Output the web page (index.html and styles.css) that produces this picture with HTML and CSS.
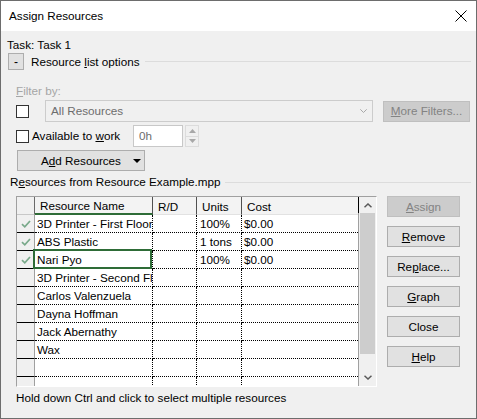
FILE: index.html
```html
<!DOCTYPE html>
<html>
<head>
<meta charset="utf-8">
<title>Assign Resources</title>
<link rel="stylesheet" href="styles.css">
</head>
<body>
<div class="dialog">
  <div class="titlebar">
    <span class="title">Assign Resources</span>
    <svg class="close" width="12" height="12" viewBox="0 0 12 12"><path d="M0.5 0.5 L11.5 11.5 M11.5 0.5 L0.5 11.5" stroke="#000" stroke-width="1" fill="none"/></svg>
  </div>
  <div class="content">
    <div class="task">Task: Task 1</div>
    <div class="opts">
      <div class="collapse">-</div>
      <span class="opts-label">Resource <u>l</u>ist options</span>
      <div class="rule"></div>
    </div>
    <div class="filter-label"><u>F</u>ilter by:</div>
    <div class="filter-row">
      <span class="cb"></span>
      <div class="combo">
        <span>All Resources</span>
        <svg width="7" height="4" viewBox="0 0 7 4"><path d="M0.3 0.3 L3.5 3.5 L6.7 0.3" stroke="#a8a8a8" stroke-width="1" fill="none"/></svg>
      </div>
      <div class="btn disabled more"><span><u>M</u>ore Filters...</span></div>
    </div>
    <div class="avail-row">
      <span class="cb"></span>
      <span class="avail-label">Available to <u>w</u>ork</span>
      <div class="hours">0h</div>
      <div class="spin">
        <div class="spin-part"><svg width="7" height="4" viewBox="0 0 7 4"><path d="M0 4 L3.5 0 L7 4 Z" fill="#a8a8a8"/></svg></div>
        <div class="spin-part"><svg width="7" height="4" viewBox="0 0 7 4"><path d="M0 0 L3.5 4 L7 0 Z" fill="#a8a8a8"/></svg></div>
      </div>
    </div>
    <div class="add-btn">
      <span class="add-text">A<u>d</u>d Resources</span>
      <svg class="add-arrow" width="8" height="4" viewBox="0 0 8 4"><path d="M0 0 L8 0 L4 4 Z" fill="#000"/></svg>
    </div>
    <div class="res-label">
      <span>R<u>e</u>sources from Resource Example.mpp</span>
      <div class="rule"></div>
    </div>
    <div class="main">
      <div class="grid">
        <div class="table">
          <div class="hrow">
            <div class="hcell c-ind"></div>
            <div class="hcell c-name active">Resource Name</div>
            <div class="hcell c-rd">R/D</div>
            <div class="hcell c-units">Units</div>
            <div class="hcell c-cost">Cost</div>
          </div>
          <div class="rows">
            <div class="row">
              <div class="ind"><svg width="10" height="8" viewBox="0 0 10 8"><path d="M1 4.2 L3.8 6.8 L9 1" stroke="#79a98a" stroke-width="1.7" fill="none"/></svg></div>
              <div class="cell c-name">3D Printer - First Floor</div>
              <div class="cell c-rd"></div>
              <div class="cell c-units">100%</div>
              <div class="cell c-cost">$0.00</div>
            </div>
            <div class="row">
              <div class="ind"><svg width="10" height="8" viewBox="0 0 10 8"><path d="M1 4.2 L3.8 6.8 L9 1" stroke="#79a98a" stroke-width="1.7" fill="none"/></svg></div>
              <div class="cell c-name">ABS Plastic</div>
              <div class="cell c-rd"></div>
              <div class="cell c-units">1 tons</div>
              <div class="cell c-cost">$0.00</div>
            </div>
            <div class="row">
              <div class="ind"><svg width="10" height="8" viewBox="0 0 10 8"><path d="M1 4.2 L3.8 6.8 L9 1" stroke="#79a98a" stroke-width="1.7" fill="none"/></svg></div>
              <div class="cell c-name sel">Nari Pyo</div>
              <div class="cell c-rd"></div>
              <div class="cell c-units">100%</div>
              <div class="cell c-cost">$0.00</div>
            </div>
            <div class="row">
              <div class="ind"></div>
              <div class="cell c-name">3D Printer - Second Floor</div>
              <div class="cell c-rd"></div>
              <div class="cell c-units"></div>
              <div class="cell c-cost"></div>
            </div>
            <div class="row">
              <div class="ind"></div>
              <div class="cell c-name">Carlos Valenzuela</div>
              <div class="cell c-rd"></div>
              <div class="cell c-units"></div>
              <div class="cell c-cost"></div>
            </div>
            <div class="row">
              <div class="ind"></div>
              <div class="cell c-name">Dayna Hoffman</div>
              <div class="cell c-rd"></div>
              <div class="cell c-units"></div>
              <div class="cell c-cost"></div>
            </div>
            <div class="row">
              <div class="ind"></div>
              <div class="cell c-name">Jack Abernathy</div>
              <div class="cell c-rd"></div>
              <div class="cell c-units"></div>
              <div class="cell c-cost"></div>
            </div>
            <div class="row">
              <div class="ind"></div>
              <div class="cell c-name">Wax</div>
              <div class="cell c-rd"></div>
              <div class="cell c-units"></div>
              <div class="cell c-cost"></div>
            </div>
            <div class="row">
              <div class="ind"></div>
              <div class="cell c-name"></div>
              <div class="cell c-rd"></div>
              <div class="cell c-units"></div>
              <div class="cell c-cost"></div>
            </div>
            <div class="row">
              <div class="ind"></div>
              <div class="cell c-name"></div>
              <div class="cell c-rd"></div>
              <div class="cell c-units"></div>
              <div class="cell c-cost"></div>
            </div>
          </div>
        </div>
        <div class="sb">
          <div class="sb-up"><svg width="8" height="5" viewBox="0 0 8 5"><path d="M0.5 4.3 L4 1 L7.5 4.3" stroke="#5a5a5a" stroke-width="1.5" fill="none"/></svg></div>
          <div class="sb-track"><div class="sb-thumb"></div></div>
          <div class="sb-down"><svg width="8" height="5" viewBox="0 0 8 5"><path d="M0.5 0.7 L4 4 L7.5 0.7" stroke="#5a5a5a" stroke-width="1.5" fill="none"/></svg></div>
        </div>
      </div>
      <div class="side">
        <div class="btn disabled"><span><u>A</u>ssign</span></div>
        <div class="btn"><span><u>R</u>emove</span></div>
        <div class="btn"><span>Re<u>p</u>lace...</span></div>
        <div class="btn"><span><u>G</u>raph</span></div>
        <div class="btn"><span>Close</span></div>
        <div class="btn"><span><u>H</u>elp</span></div>
      </div>
    </div>
    <div class="footer">Hold down Ctrl and click to select multiple resources</div>
  </div>
</div>
</body>
</html>
```

FILE: styles.css
```css
* {
  box-sizing: border-box;
}

html, body {
  margin: 0;
  padding: 0;
}

body {
  background: #ffffff;
  font-family: "Liberation Sans", Arial, sans-serif;
  font-size: 11.7px;
  line-height: 14px;
  color: #000;
}

u {
  text-decoration: underline;
  text-underline-offset: 1px;
}

.dialog {
  width: 477px;
  height: 419px;
  border: 1px solid #6d6d6d;
  background: #f0f0f0;
  display: flex;
  flex-direction: column;
}

.titlebar {
  flex: none;
  height: 30px;
  background: #ffffff;
  display: flex;
  align-items: center;
  justify-content: space-between;
  padding: 0 9px 0 8px;
}

.close {
  display: block;
}

.content {
  flex: 1;
  display: flex;
  flex-direction: column;
  align-items: flex-start;
  padding: 7px 0 0 6px;
}

.task {
  height: 14px;
}

.opts {
  align-self: stretch;
  margin-top: 1px;
  height: 17px;
  display: flex;
  align-items: center;
  padding-right: 5px;
}

.collapse {
  margin-left: 1px;
  width: 16px;
  height: 17px;
  background: #e1e1e1;
  border: 1px solid #adadad;
  display: flex;
  justify-content: center;
  align-items: flex-end;
  line-height: 13px;
  font-size: 12px;
}

.opts-label {
  margin-left: 7px;
}

.rule {
  flex: 1;
  height: 1px;
  background: #dcdcdc;
  margin-left: 5px;
}

.filter-label {
  margin-top: 14px;
  margin-left: 9px;
  height: 14px;
  color: #a6a6a6;
}

.filter-row {
  margin-top: 2px;
  margin-left: 9px;
  height: 22px;
  display: flex;
  align-items: center;
}

.cb {
  width: 13px;
  height: 13px;
  border: 1px solid #333333;
  background: #ffffff;
  flex: none;
}

.combo {
  margin-left: 16px;
  width: 328px;
  height: 22px;
  border: 1px solid #cccccc;
  background: #f0f0f0;
  display: flex;
  align-items: center;
  justify-content: space-between;
  padding: 0 5px 0 5px;
  color: #6d6d6d;
}

.combo svg {
  display: block;
}

.btn {
  width: 73px;
  height: 21px;
  background: #e1e1e1;
  border: 1px solid #adadad;
  display: flex;
  align-items: center;
  justify-content: center;
}

.btn.disabled {
  background: #cccccc;
  border-color: #bfbfbf;
  color: #838383;
}

.more {
  margin-left: 10px;
  width: 87px;
}

.avail-row {
  margin-top: 3px;
  margin-left: 9px;
  height: 22px;
  display: flex;
  align-items: center;
}

.avail-label {
  margin-left: 3px;
  width: 101px;
}

.hours {
  width: 50px;
  height: 22px;
  border: 1px solid #c8c8c8;
  background: #ffffff;
  color: #6d6d6d;
  display: flex;
  align-items: center;
  padding-left: 5px;
}

.spin {
  margin-left: 2px;
  width: 14px;
  height: 22px;
  display: flex;
  flex-direction: column;
}

.spin-part {
  flex: 1;
  border: 1px solid #dcdcdc;
  background: #f0f0f0;
  display: flex;
  align-items: center;
  justify-content: center;
}

.spin-part + .spin-part {
  border-top: none;
}

.spin-part svg {
  display: block;
}

.add-btn {
  margin-top: 3px;
  margin-left: 10px;
  width: 128px;
  height: 21px;
  background: #e1e1e1;
  border: 1px solid #adadad;
  display: grid;
  grid-template-columns: 1fr auto 1fr;
  align-items: center;
}

.add-text {
  grid-column: 2;
}

.add-arrow {
  grid-column: 3;
  justify-self: end;
  margin-right: 3px;
  display: block;
}

.res-label {
  align-self: stretch;
  margin-top: 4px;
  margin-left: 3px;
  height: 14px;
  display: flex;
  align-items: center;
  padding-right: 5px;
}

.main {
  margin-top: 7px;
  margin-left: 9px;
  display: flex;
  align-items: flex-start;
}

.grid {
  width: 361px;
  height: 191px;
  border: 1px solid;
  border-color: #a0a0a0 #ffffff #ffffff #a0a0a0;
  background: #ffffff;
  display: flex;
}

.table {
  width: 341px;
  display: flex;
  flex-direction: column;
}

.hrow {
  display: flex;
  height: 18px;
  flex: none;
}

.hcell {
  height: 18px;
  background: #f3f3f3;
  border-right: 1px solid #505050;
  border-bottom: 1px solid #e2e2e2;
  padding: 2px 0 0 5px;
  line-height: 15px;
  white-space: nowrap;
}

.hcell.c-ind {
  border-right-color: #6a6a6a;
  border-bottom-color: #c8c8c8;
  background: #f0f0f0;
}

.hcell.active {
  border-bottom: 2px solid #2e6c37;
  line-height: 14px;
}

.hcell.c-cost {
  border-right: none;
}

.c-ind {
  width: 18px;
  flex: none;
}

.c-name {
  width: 118px;
  flex: none;
}

.c-rd {
  width: 44px;
  flex: none;
}

.c-units {
  width: 45px;
  flex: none;
}

.c-cost {
  width: 116px;
  flex: none;
}

.rows {
  flex: 1;
  overflow: hidden;
}

.row {
  display: flex;
  height: 18px;
}

.ind {
  width: 18px;
  flex: none;
  background: #f0f0f0;
  border-right: 1px solid #a0a0a0;
  border-bottom: 1px solid #000000;
  display: flex;
  align-items: center;
  justify-content: center;
}

.ind svg {
  display: block;
  margin-top: 1px;
}

.cell {
  height: 18px;
  border-right: 1px dotted #000000;
  border-bottom: 1px dotted #000000;
  padding-left: 2px;
  line-height: 17px;
  white-space: nowrap;
  overflow: hidden;
}

.cell.c-units {
  padding-left: 3px;
}

.cell.c-cost {
  border-right: none;
}

.cell.sel {
  position: relative;
  overflow: visible;
}

.cell.sel::after {
  content: "";
  position: absolute;
  top: -2px;
  left: -2px;
  right: 0;
  bottom: -1px;
  border: 2px solid #2e6c37;
  z-index: 2;
}

.sb {
  width: 18px;
  flex: none;
  display: flex;
  flex-direction: column;
  background: #f0f0f0;
}

.sb-up {
  height: 16px;
  flex: none;
  border-left: 1px solid #000000;
  display: flex;
  align-items: center;
  justify-content: center;
}

.sb-up svg, .sb-down svg {
  display: block;
}

.sb-track {
  flex: 1;
  border-left: 1px solid #a0a0a0;
  padding-left: 1px;
}

.sb-thumb {
  width: 15px;
  height: 141px;
  background: #cdcdcd;
}

.sb-down {
  height: 17px;
  flex: none;
  border-left: 1px solid #a0a0a0;
  display: flex;
  align-items: center;
  justify-content: center;
}

.side {
  margin-left: 10px;
  display: flex;
  flex-direction: column;
  gap: 9px;
}

.footer {
  margin-top: 4px;
  margin-left: 9px;
  height: 14px;
}
```
